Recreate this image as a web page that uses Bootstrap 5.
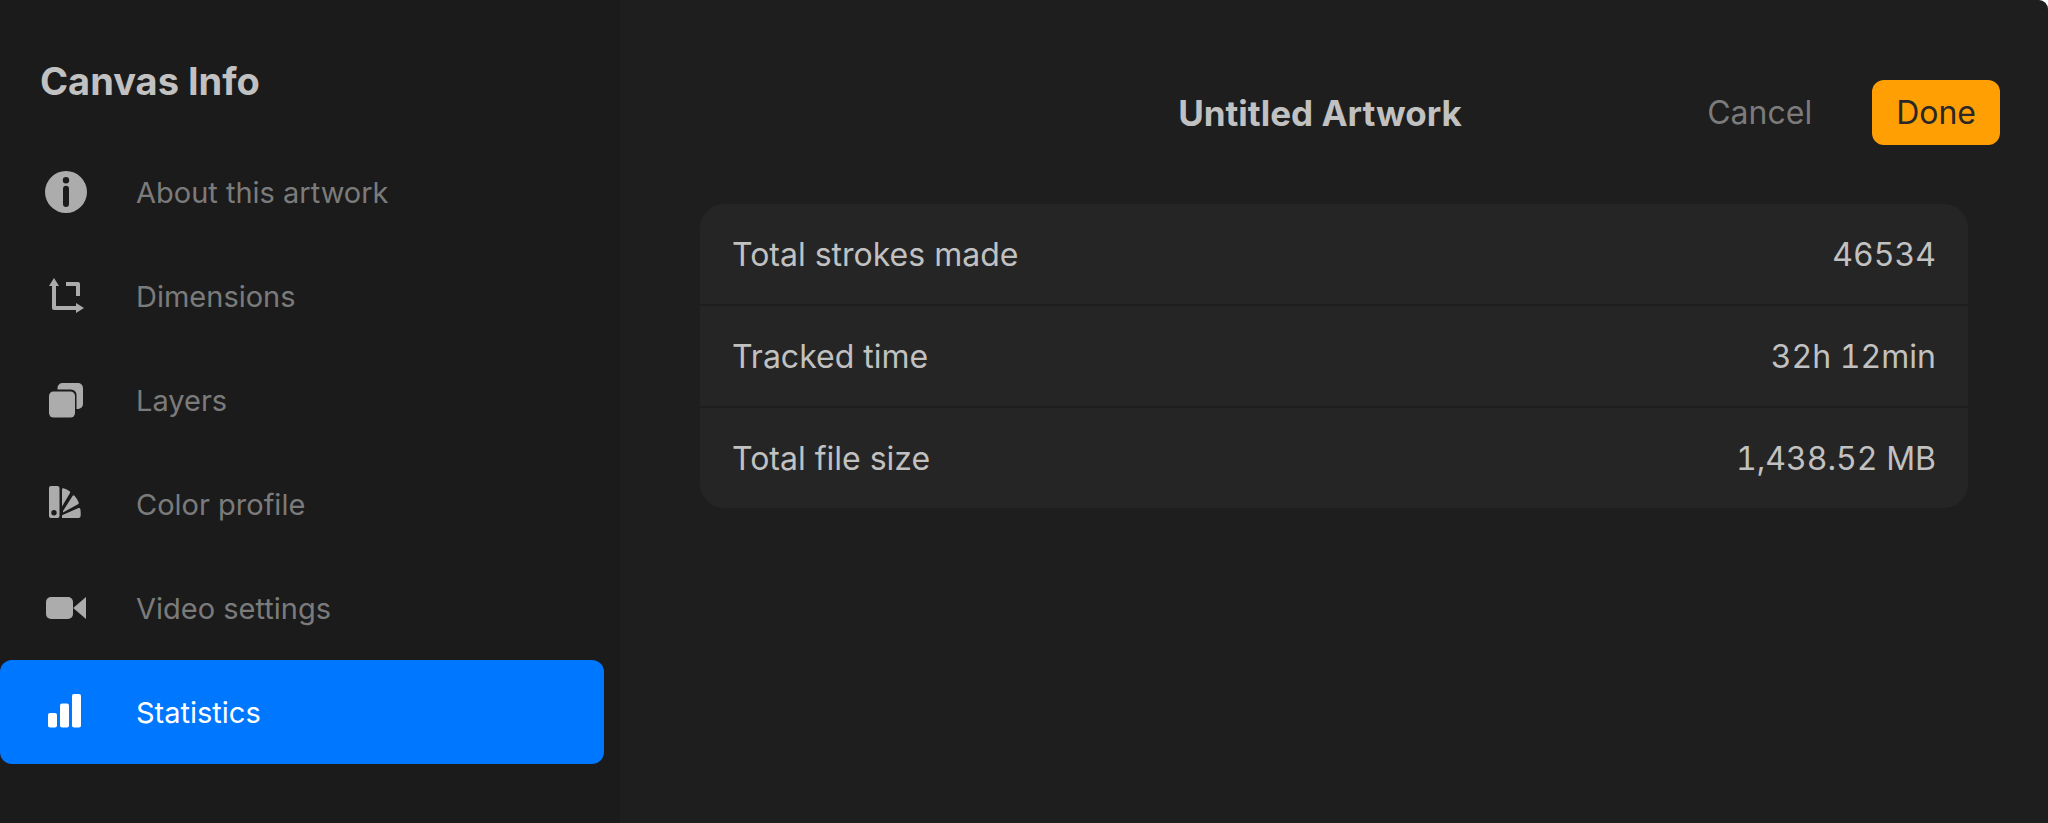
<!DOCTYPE html>
<html lang="en">
<head>
<meta charset="utf-8">
<meta name="viewport" content="width=device-width, initial-scale=1">
<title>Canvas Info</title>
<link rel="stylesheet" href="https://cdn.jsdelivr.net/npm/bootstrap@5.3.0/dist/css/bootstrap.min.css">
<style>
  body { background: #fff; color: #c1c1c1; font-family: Inter, "Liberation Sans", sans-serif; }
  .app { background: #1e1e1e; border-top-right-radius: 9px; overflow: hidden; }
  .side { background: #1b1b1b; width: 620px; padding: 57px 16px 56px 0; }
  .side-title { font-size: 38px; line-height: 48px; font-weight: 700; margin: 0 0 35px 40px; }
  .side .nav-link { height: 104px; padding: 0 40px; gap: 44px; border-radius: 12px; font-size: 29px; line-height: 36px; color: #7b7b7b; }
  .side .nav-link svg { width: 52px; height: 52px; color: #acacac; }
  .side .nav-link span { padding-top: 2px; }
  .side .nav-link.active { background: #0077ff; color: #fff; }
  .side .nav-link.active svg { color: #fff; }
  .top-bar { display: grid; grid-template-columns: 1fr auto 1fr; padding: 80px 48px 59px 20px; }
  .top-title { grid-column: 2; font-size: 35px; line-height: 44px; font-weight: 700; }
  .top-actions { gap: 36px; }
  .top-bar .btn { font-size: 32px; line-height: 41px; padding: 12px 24px; border: 0; border-radius: 12px; }
  .btn-cancel, .btn-cancel:hover { color: #7b7b7b; }
  .btn-done, .btn-done:hover { background: #ff9f04; color: #282828; }
  .stats { background: #252525; border-radius: 24px; margin: 0 80px; overflow: hidden; }
  .stats table { border-collapse: separate; border-spacing: 0; }
  .stats th, .stats td { height: 100px; padding: 2px 32px 0; font-size: 32px; font-weight: 400; }
  .stats td { font-variant-numeric: tabular-nums; }
  .stats tr + tr > * { height: 102px; border-top: 2px solid #1e1e1e; }
</style>
</head>
<body>
<div class="app d-flex min-vh-100">
  <aside class="side flex-shrink-0">
    <h1 class="side-title">Canvas Info</h1>
    <nav class="nav nav-pills flex-column">
      <a class="nav-link d-flex align-items-center" href="#about">
        <svg viewBox="0 0 52 52" fill="currentColor" aria-hidden="true"><path fill-rule="evenodd" d="M26 5a21 21 0 1 1 0 42a21 21 0 0 1 0-42zM26 11a3.200 3.200 0 1 0 0 6.400a3.200 3.200 0 0 0 0-6.400zM26 19.700a3 3 0 0 0-3 3V38a3 3 0 0 0 6 0V22.700a3 3 0 0 0-3-3z"/></svg>
        <span>About this artwork</span>
      </a>
      <a class="nav-link d-flex align-items-center" href="#dimensions">
        <svg viewBox="0 0 52 52" fill="currentColor" aria-hidden="true"><path d="M14 8l5 8h-3v20h20v-3l8 5-8 5v-3H14a2 2 0 0 1-2-2V16H9zM26 12h12a2 2 0 0 1 2 2v12h-4V16H26z"/></svg>
        <span>Dimensions</span>
      </a>
      <a class="nav-link d-flex align-items-center" href="#layers">
        <svg viewBox="0 0 52 52" fill="currentColor" aria-hidden="true"><rect x="9" y="17.500" width="26" height="26" rx="4.500"/><path d="M17.500 15.500V14a5 5 0 0 1 5-5H38a5 5 0 0 1 5 5v16a5 5 0 0 1-5 5h-1.500V21a5.500 5.500 0 0 0-5.500-5.500z"/></svg>
        <span>Layers</span>
      </a>
      <a class="nav-link d-flex align-items-center" href="#color-profile">
        <svg viewBox="0 0 52 52" fill="currentColor" aria-hidden="true"><path fill-rule="evenodd" d="M11 8h6.500a2 2 0 0 1 2 2v28a2 2 0 0 1-2 2H11a2 2 0 0 1-2-2V10a2 2 0 0 1 2-2zM14 32a2.700 2.700 0 1 0 0 5.400a2.700 2.700 0 0 0 0-5.400z"/><path d="M22 11.500Q22 10 23.500 10.200Q27 11 29.600 13.200Q30.500 14 30 15L22 28.500zM23 33L32.700 17.700Q33.500 16.700 34.500 17.700Q37.500 21 38.700 24.500Q39 25.500 38 26.200L23 34.500zM22 37.300L38.500 30Q40 29.500 40.300 31Q41 34.500 40.600 38.200Q40.300 40 38.600 40H22z"/></svg>
        <span>Color profile</span>
      </a>
      <a class="nav-link d-flex align-items-center" href="#video">
        <svg viewBox="0 0 52 52" fill="currentColor" aria-hidden="true"><rect x="6" y="15" width="27" height="22" rx="5"/><path d="M33.200 26L46 15v22z"/></svg>
        <span>Video settings</span>
      </a>
      <a class="nav-link active d-flex align-items-center" href="#statistics" aria-current="page">
        <svg viewBox="0 0 52 52" fill="currentColor" aria-hidden="true"><rect x="8" y="27" width="9" height="14.500" rx="2"/><rect x="20" y="17.500" width="9" height="24" rx="2"/><rect x="32" y="8" width="9" height="33.500" rx="2"/></svg>
        <span>Statistics</span>
      </a>
    </nav>
  </aside>
  <main class="flex-grow-1">
    <header class="top-bar align-items-center">
      <h2 class="top-title m-0">Untitled Artwork</h2>
      <div class="top-actions d-flex justify-content-end">
        <button type="button" class="btn btn-cancel">Cancel</button>
        <button type="button" class="btn btn-done">Done</button>
      </div>
    </header>
    <div class="stats">
      <table class="w-100">
        <tbody>
          <tr><th scope="row">Total strokes made</th><td class="text-end">46534</td></tr>
          <tr><th scope="row">Tracked time</th><td class="text-end">32h 12min</td></tr>
          <tr><th scope="row">Total file size</th><td class="text-end">1,438.52 MB</td></tr>
        </tbody>
      </table>
    </div>
  </main>
</div>
<script src="https://cdn.jsdelivr.net/npm/bootstrap@5.3.0/dist/js/bootstrap.bundle.min.js"></script>
</body>
</html>
